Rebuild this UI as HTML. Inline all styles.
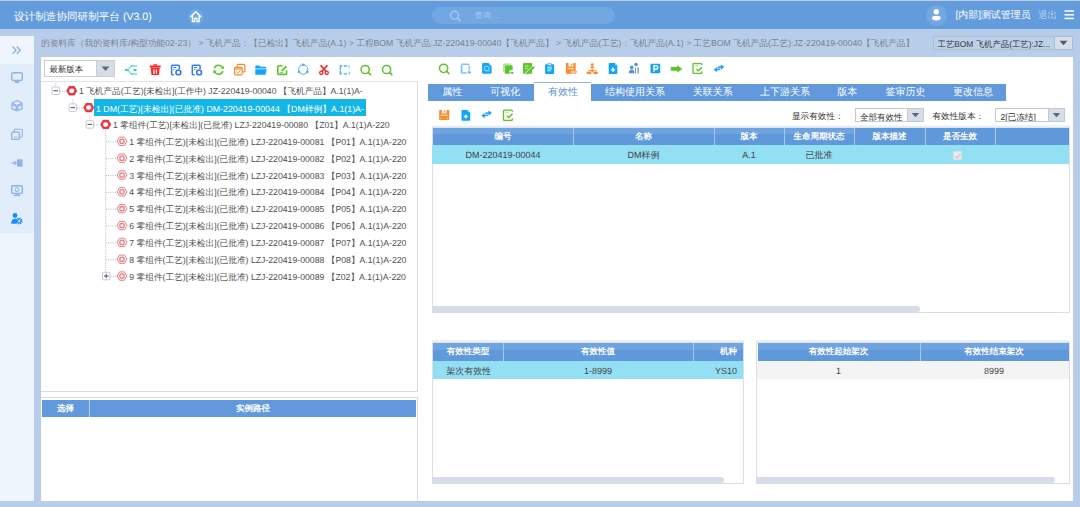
<!DOCTYPE html>
<html><head><meta charset="utf-8">
<style>
*{box-sizing:border-box}
html,body{margin:0;padding:0}
body{width:1080px;height:507px;overflow:hidden;position:relative;background:#b8cde9;font-family:"Liberation Sans",sans-serif;color:#333;text-rendering:geometricPrecision}
.a{position:absolute}
.t{position:absolute;white-space:nowrap}
svg{position:absolute;overflow:visible}
/* header */
#topline{left:0;top:0;width:1080px;height:1px;background:#bccde2}
#hdr{left:0;top:1px;width:1080px;height:27.5px;background:#629cdc}
#title{left:14px;top:10px;font-size:10.6px;font-weight:500;line-height:14px;color:#fff}
#homec{left:188px;top:8.5px;width:16px;height:16px;border-radius:50%;background:#70a6e2}
#search{left:432px;top:7px;width:183px;height:17px;border-radius:9px;background:#72a7e1}
#ph{left:474.5px;top:9px;font-size:8.2px;line-height:13px;color:#a9c9ef}
#userc{left:926px;top:4.5px;width:21px;height:21px;border-radius:50%;background:#72a7e1}
#uname{left:955.5px;top:8.7px;font-size:9.95px;font-weight:500;line-height:14px;color:#fff}
#logout{left:1038px;top:8.7px;font-size:9.6px;line-height:14px;color:#b9d2f0}
/* breadcrumb */
#crumb{left:41px;top:36px;font-size:8.7px;line-height:14px;color:#7c828c}
#crsel{left:932.5px;top:36px;width:140px;height:13.7px;border:1px solid #aebdd0;background:#bcd0ea}
#crseltxt{left:937.5px;top:36.5px;font-size:8.4px;line-height:14px;color:#333}
#crselbtn{left:1054px;top:36px;width:18.5px;height:13.7px;border:1px solid #aebdd0;background:#d7dfea}
/* sidebar */
#side{left:0;top:36px;width:34px;height:471px;background:#e1edfb}
#side1{left:0;top:36px;width:34px;height:28px;background:#eef5fd}
#side2{left:0;top:233px;width:34px;height:274px;background:#eef5fd}
/* panel */
#panel{left:41px;top:57px;width:1032px;height:443.5px;background:#fff}
#sep{left:41px;top:81px;width:376.5px;height:1px;background:#dfe4ec}
#treebox{left:41px;top:81px;width:377px;height:311px;border-top:1px solid #dfe4ec;border-right:1px solid #d6dce6;border-bottom:1px solid #d6dce6}
#vline{left:417px;top:397px;width:1px;height:104px;background:#d6dce6}
#selbox{left:41px;top:397px;width:377px;height:104px;border-top:1px solid #d6dce6}
.hd{position:absolute;background:linear-gradient(#70a4e0 0,#70a4e0 6.5px,#6098dc 6.5px);color:#fff;font-weight:bold;font-size:8.5px;text-align:center}
.hc{position:absolute;top:0;white-space:nowrap;text-align:center}
.col{position:absolute;top:0;bottom:0;width:1px;background:#a9c6ee}
/* version dropdown */
#vsel{left:44px;top:60px;width:71px;height:17px;border:1px solid #c9cfd9;background:#fff}
#vselbtn{left:96px;top:60px;width:19px;height:17px;border:1px solid #c9cfd9;background:#d7dde6}
#vseltxt{left:49.5px;top:62px;font-size:8.4px;line-height:14px;color:#333}
/* tree */
.row{position:absolute;height:16.85px;line-height:18.9px;font-size:8.7px;white-space:nowrap;color:#505050}
/* tabs */
#tabs{left:428px;top:84px;width:578px;height:17px;background:#6199dc}
#acttab{left:534px;top:82px;width:57px;height:19.5px;background:#fff;border-top:1px solid #8fb6ea}
.tab{position:absolute;top:84px;line-height:17px;font-size:10px;color:#fff;white-space:nowrap}
/* filter */
.lbl{position:absolute;font-size:8.6px;line-height:13px;color:#333;white-space:nowrap}
.dd{position:absolute;border:1px solid #c2c9d4;background:#fff}
.ddb{position:absolute;border:1px solid #c2c9d4;background:#d8dee7}
/* grids */
.grid{position:absolute;border:1px solid #d9dee8;background:#fff}
.cell{position:absolute;z-index:2;font-size:9px;line-height:20.5px;white-space:nowrap;color:#444;text-align:center}
.sb{position:absolute;height:6px;border-radius:0 3px 3px 0;background:#d6dde8}
</style></head><body>
<div class="a" id="topline"></div>
<div class="a" id="hdr"></div>
<div class="t" id="title">设计制造协同研制平台 (V3.0)</div>
<div class="a" id="homec"></div>
<div class="a" id="search"></div>
<div class="t" id="ph">查询 ...</div>
<div class="a" id="userc"></div>
<div class="t" id="uname">[内部]测试管理员</div>
<div class="t" id="logout">退出</div>

<div class="t" id="crumb">的资料库（我的资料库/构型功能02-23） &gt; 飞机产品：【已检出】飞机产品(A.1) &gt; 工程BOM 飞机产品:JZ-220419-00040【飞机产品】 &gt; 飞机产品(工艺)：飞机产品(A.1) &gt; 工艺BOM 飞机产品(工艺):JZ-220419-00040【飞机产品】</div>
<div class="a" id="crsel"></div>
<div class="t" id="crseltxt">工艺BOM 飞机产品(工艺):JZ...</div>
<div class="a" id="crselbtn"></div>

<div class="a" id="side"></div>
<div class="a" id="side1"></div>
<div class="a" id="side2"></div>

<div class="a" id="panel"></div>
<div class="a" id="treebox"></div>
<div class="a" id="selbox"></div>
<div class="a" id="vline"></div>
<div class="hd" style="left:42px;top:400px;width:374px;height:16.7px;line-height:17.2px;background:#6199dc">
  <div class="col" style="left:47px;background:#b5cff0"></div>
  <span class="hc" style="left:0;width:47px">选择</span>
  <span class="hc" style="left:48px;width:326px">实例路径</span>
</div>

<div class="a" id="vsel"></div>
<div class="a" id="vselbtn"></div>
<div class="t" id="vseltxt">最新版本</div>

<!-- TREE -->
<!--TREE-->
<div class="row" style="left:79px;top:82.3px;font-size:8.65px">1 飞机产品(工艺)[未检出](工作中) JZ-220419-00040 【飞机产品】A.1(1)A-</div>
<div class="a" style="left:94.4px;top:99px;width:271.7px;height:16.6px;background:#14b6e8"></div>
<div class="row" style="left:96px;top:100.15px;color:#fff;font-size:8.8px">1 DM(工艺)[未检出](已批准) DM-220419-00044 【DM样例】A.1(1)A-</div>
<div class="row" style="left:113px;top:116.0px">1 零组件(工艺)[未检出](已批准) LZJ-220419-00080 【Z01】A.1(1)A-220</div>
<div class="row" style="left:129.3px;top:132.85px">1 零组件(工艺)[未检出](已批准) LZJ-220419-00081 【P01】A.1(1)A-220</div>
<div class="row" style="left:129.3px;top:149.7px">2 零组件(工艺)[未检出](已批准) LZJ-220419-00082 【P02】A.1(1)A-220</div>
<div class="row" style="left:129.3px;top:166.55px">3 零组件(工艺)[未检出](已批准) LZJ-220419-00083 【P03】A.1(1)A-220</div>
<div class="row" style="left:129.3px;top:183.4px">4 零组件(工艺)[未检出](已批准) LZJ-220419-00084 【P04】A.1(1)A-220</div>
<div class="row" style="left:129.3px;top:200.25px">5 零组件(工艺)[未检出](已批准) LZJ-220419-00085 【P05】A.1(1)A-220</div>
<div class="row" style="left:129.3px;top:217.10000000000002px">6 零组件(工艺)[未检出](已批准) LZJ-220419-00086 【P06】A.1(1)A-220</div>
<div class="row" style="left:129.3px;top:233.95px">7 零组件(工艺)[未检出](已批准) LZJ-220419-00087 【P07】A.1(1)A-220</div>
<div class="row" style="left:129.3px;top:250.8px">8 零组件(工艺)[未检出](已批准) LZJ-220419-00088 【P08】A.1(1)A-220</div>
<div class="row" style="left:129.3px;top:267.65000000000003px">9 零组件(工艺)[未检出](已批准) LZJ-220419-00089 【Z02】A.1(1)A-220</div>
<svg class="a" style="left:0;top:0" width="1080" height="507"><line x1="105.75" y1="128.425" x2="105.75" y2="272.07500000000005" stroke="#b4b9cc" stroke-width="1" stroke-dasharray="1,1.2"/><rect x="52.0" y="86.975" width="7.5" height="7.5" rx="1" fill="#fff" stroke="#c3c7da" stroke-width="1"/><line x1="53.5" y1="90.725" x2="58.0" y2="90.725" stroke="#5d6885" stroke-width="1.2"/><line x1="55.75" y1="82.725" x2="55.75" y2="86.225" stroke="#b4b9cc" stroke-width="1" stroke-dasharray="1,1.2"/><line x1="60.0" y1="91.225" x2="66.5" y2="91.225" stroke="#b4b9cc" stroke-width="1" stroke-dasharray="1,1.2"/><polygon points="77.20,90.72 74.45,95.39 68.95,95.39 66.20,90.72 68.95,86.06 74.45,86.06" fill="#ef3340"/><ellipse cx="71.7" cy="90.725" rx="2.6" ry="2.3" fill="#fff"/><rect x="69.0" y="103.825" width="7.5" height="7.5" rx="1" fill="#fff" stroke="#c3c7da" stroke-width="1"/><line x1="70.5" y1="107.575" x2="75.0" y2="107.575" stroke="#5d6885" stroke-width="1.2"/><line x1="72.75" y1="99.575" x2="72.75" y2="103.075" stroke="#b4b9cc" stroke-width="1" stroke-dasharray="1,1.2"/><line x1="77.0" y1="108.075" x2="83.5" y2="108.075" stroke="#b4b9cc" stroke-width="1" stroke-dasharray="1,1.2"/><polygon points="94.20,107.58 91.45,112.24 85.95,112.24 83.20,107.58 85.95,102.91 91.45,102.91" fill="#ef3340"/><ellipse cx="88.7" cy="107.575" rx="2.6" ry="2.3" fill="#fff"/><rect x="86.0" y="120.675" width="7.5" height="7.5" rx="1" fill="#fff" stroke="#c3c7da" stroke-width="1"/><line x1="87.5" y1="124.425" x2="92.0" y2="124.425" stroke="#5d6885" stroke-width="1.2"/><line x1="89.75" y1="116.425" x2="89.75" y2="119.925" stroke="#b4b9cc" stroke-width="1" stroke-dasharray="1,1.2"/><line x1="94.0" y1="124.925" x2="100.5" y2="124.925" stroke="#b4b9cc" stroke-width="1" stroke-dasharray="1,1.2"/><polygon points="111.20,124.42 108.45,129.09 102.95,129.09 100.20,124.42 102.95,119.76 108.45,119.76" fill="#ef3340"/><ellipse cx="105.7" cy="124.425" rx="2.6" ry="2.3" fill="#fff"/><line x1="106" y1="141.775" x2="116" y2="141.775" stroke="#b4b9cc" stroke-width="1" stroke-dasharray="1,1.2"/><polygon points="126.90,141.28 124.45,145.43 119.55,145.43 117.10,141.28 119.55,137.12 124.45,137.12" fill="none" stroke="#f07a7e" stroke-width="1"/><circle cx="122" cy="141.275" r="2.2" fill="none" stroke="#f07a7e" stroke-width="1.3"/><line x1="106" y1="158.625" x2="116" y2="158.625" stroke="#b4b9cc" stroke-width="1" stroke-dasharray="1,1.2"/><polygon points="126.90,158.12 124.45,162.28 119.55,162.28 117.10,158.12 119.55,153.97 124.45,153.97" fill="none" stroke="#f07a7e" stroke-width="1"/><circle cx="122" cy="158.125" r="2.2" fill="none" stroke="#f07a7e" stroke-width="1.3"/><line x1="106" y1="175.47500000000002" x2="116" y2="175.47500000000002" stroke="#b4b9cc" stroke-width="1" stroke-dasharray="1,1.2"/><polygon points="126.90,174.98 124.45,179.13 119.55,179.13 117.10,174.98 119.55,170.82 124.45,170.82" fill="none" stroke="#f07a7e" stroke-width="1"/><circle cx="122" cy="174.97500000000002" r="2.2" fill="none" stroke="#f07a7e" stroke-width="1.3"/><line x1="106" y1="192.32500000000002" x2="116" y2="192.32500000000002" stroke="#b4b9cc" stroke-width="1" stroke-dasharray="1,1.2"/><polygon points="126.90,191.83 124.45,195.98 119.55,195.98 117.10,191.83 119.55,187.67 124.45,187.67" fill="none" stroke="#f07a7e" stroke-width="1"/><circle cx="122" cy="191.82500000000002" r="2.2" fill="none" stroke="#f07a7e" stroke-width="1.3"/><line x1="106" y1="209.175" x2="116" y2="209.175" stroke="#b4b9cc" stroke-width="1" stroke-dasharray="1,1.2"/><polygon points="126.90,208.68 124.45,212.83 119.55,212.83 117.10,208.68 119.55,204.52 124.45,204.52" fill="none" stroke="#f07a7e" stroke-width="1"/><circle cx="122" cy="208.675" r="2.2" fill="none" stroke="#f07a7e" stroke-width="1.3"/><line x1="106" y1="226.02500000000003" x2="116" y2="226.02500000000003" stroke="#b4b9cc" stroke-width="1" stroke-dasharray="1,1.2"/><polygon points="126.90,225.53 124.45,229.68 119.55,229.68 117.10,225.53 119.55,221.37 124.45,221.37" fill="none" stroke="#f07a7e" stroke-width="1"/><circle cx="122" cy="225.52500000000003" r="2.2" fill="none" stroke="#f07a7e" stroke-width="1.3"/><line x1="106" y1="242.875" x2="116" y2="242.875" stroke="#b4b9cc" stroke-width="1" stroke-dasharray="1,1.2"/><polygon points="126.90,242.38 124.45,246.53 119.55,246.53 117.10,242.38 119.55,238.22 124.45,238.22" fill="none" stroke="#f07a7e" stroke-width="1"/><circle cx="122" cy="242.375" r="2.2" fill="none" stroke="#f07a7e" stroke-width="1.3"/><line x1="106" y1="259.725" x2="116" y2="259.725" stroke="#b4b9cc" stroke-width="1" stroke-dasharray="1,1.2"/><polygon points="126.90,259.23 124.45,263.38 119.55,263.38 117.10,259.23 119.55,255.07 124.45,255.07" fill="none" stroke="#f07a7e" stroke-width="1"/><circle cx="122" cy="259.225" r="2.2" fill="none" stroke="#f07a7e" stroke-width="1.3"/><rect x="102.5" y="272.32500000000005" width="7.5" height="7.5" rx="1" fill="#fff" stroke="#c3c7da" stroke-width="1"/><line x1="104" y1="276.07500000000005" x2="108.5" y2="276.07500000000005" stroke="#5d6885" stroke-width="1.2"/><line x1="106.25" y1="273.82500000000005" x2="106.25" y2="278.32500000000005" stroke="#5d6885" stroke-width="1.2"/><line x1="110.5" y1="276.57500000000005" x2="116" y2="276.57500000000005" stroke="#b4b9cc" stroke-width="1" stroke-dasharray="1,1.2"/><polygon points="126.90,276.08 124.45,280.23 119.55,280.23 117.10,276.08 119.55,271.92 124.45,271.92" fill="none" stroke="#f07a7e" stroke-width="1"/><circle cx="122" cy="276.07500000000005" r="2.2" fill="none" stroke="#f07a7e" stroke-width="1.3"/></svg>
<!--/TREE-->

<!-- TABS -->
<div class="a" id="tabs"></div>
<div class="a" id="acttab"></div>
<div class="tab" style="left:442.2px;color:#fff">属性</div>
<div class="tab" style="left:490.2px;color:#fff">可视化</div>
<div class="tab" style="left:548.1px;color:#5b8fd8">有效性</div>
<div class="tab" style="left:605.1px;color:#fff">结构使用关系</div>
<div class="tab" style="left:692.7px;color:#fff">关联关系</div>
<div class="tab" style="left:759.9px;color:#fff">上下游关系</div>
<div class="tab" style="left:837.3px;color:#fff">版本</div>
<div class="tab" style="left:885.5px;color:#fff">签审历史</div>
<div class="tab" style="left:952.9px;color:#fff">更改信息</div>


<!-- filter row -->
<div class="lbl" style="left:792px;top:109.5px">显示有效性：</div>
<div class="dd" style="left:855px;top:108px;width:69px;height:14px"></div>
<div class="ddb" style="left:907px;top:108px;width:17px;height:14px"></div>
<div class="a" style="left:856px;top:109px;width:51px;height:12px;overflow:hidden"><div class="lbl" style="left:4px;top:1.9px;font-size:8.5px">全部有效性</div></div>
<div class="lbl" style="left:932.5px;top:109.5px">有效性版本：</div>
<div class="dd" style="left:995px;top:108px;width:70px;height:14px"></div>
<div class="ddb" style="left:1048px;top:108px;width:17px;height:14px"></div>
<div class="a" style="left:996px;top:109px;width:52px;height:12px;overflow:hidden"><div class="lbl" style="left:4.5px;top:1.9px">2[已冻结]</div></div>

<!-- main grid -->
<div class="grid" style="left:432px;top:126px;width:638px;height:187px;border-top:0"></div>
<div class="a" style="left:432px;top:125px;width:638px;height:2.5px;background:linear-gradient(#fbfcfd,#d9dee6)"></div>
<div class="hd" style="left:433px;top:127.5px;width:636px;height:17.5px;line-height:17.5px;background:linear-gradient(#70a4e0 0,#70a4e0 6.5px,#6098dc 6.5px) 0 0/421px 100% no-repeat,#6098dc">
  <div class="col" style="left:140px"></div>
  <div class="col" style="left:281px"></div>
  <div class="col" style="left:351px"></div>
  <div class="col" style="left:421px"></div>
  <div class="col" style="left:492px"></div>
  <div class="col" style="left:562px"></div>
<span class="hc" style="left:0px;width:140px">编号</span><span class="hc" style="left:140px;width:141px">名称</span><span class="hc" style="left:281px;width:70px">版本</span><span class="hc" style="left:351px;width:70px">生命周期状态</span><span class="hc" style="left:421px;width:71px">版本描述</span><span class="hc" style="left:492px;width:70px">是否生效</span>
</div>
<div class="a" style="left:432px;top:145px;width:637px;height:18.5px;background:#93e0f5"></div>
<div class="cell" style="left:433px;top:145px;width:140px">DM-220419-00044</div><div class="cell" style="left:573px;top:145px;width:141px">DM样例</div><div class="cell" style="left:714px;top:145px;width:70px">A.1</div><div class="cell" style="left:784px;top:145px;width:70px">已批准</div><div class="a" style="left:952.5px;top:150.5px;width:9.5px;height:9.5px;border:1px solid #dcdfe3;background:#e9eaec;border-radius:1px"></div><svg style="left:952.5px;top:150.5px;z-index:2" width="10" height="10"><path d="M2.2 5 L4.2 6.9 L7.6 3" fill="none" stroke="#c6c8cc" stroke-width="1.2"/></svg>
<div class="sb" style="left:432px;top:306px;width:488px"></div>

<!-- bottom grids -->
<div class="grid" style="left:432px;top:340px;width:312px;height:144px;border-top:0"></div>
<div class="a" style="left:432px;top:340px;width:312px;height:3px;background:linear-gradient(#f3f5f8,#dde2ea)"></div>
<div class="hd" style="left:433px;top:343px;width:310px;height:17.5px;line-height:17.5px">
  <div class="col" style="left:70px"></div>
  <div class="col" style="left:260px"></div>
  <span class="hc" style="left:0;width:70px">有效性类型</span><span class="hc" style="left:70px;width:190px">有效性值</span><span class="hc" style="left:260px;width:44px;text-align:right">机种</span>
</div>
<div class="cell" style="left:446.3px;top:360.5px;text-align:left">架次有效性</div>
<div class="cell" style="left:503px;top:360.5px;width:190px">1-8999</div>
<div class="cell" style="left:693px;top:360.5px;width:44px;text-align:right">YS10</div>
<div class="a" style="left:433px;top:360.5px;width:310px;height:18.5px;background:#93e0f5"></div>
<div class="sb" style="left:432px;top:477px;width:292px"></div>

<div class="grid" style="left:756px;top:340px;width:313.5px;height:144px;border-top:0"></div>
<div class="a" style="left:756px;top:340px;width:313.5px;height:3px;background:linear-gradient(#f3f5f8,#dde2ea)"></div>
<div class="hd" style="left:757.5px;top:343px;width:311px;height:17.5px;line-height:17.5px">
  <div class="col" style="left:162px"></div>
  <span class="hc" style="left:0;width:162px">有效性起始架次</span><span class="hc" style="left:162px;width:149px">有效性结束架次</span>
</div>
<div class="cell" style="left:757.5px;top:360.5px;width:162px">1</div>
<div class="cell" style="left:919.5px;top:360.5px;width:149px">8999</div>
<div class="a" style="left:757px;top:360.5px;width:312px;height:18.5px;background:#f4f4f5"></div>
<div class="sb" style="left:757px;top:477px;width:298px"></div>

<div class="a" style="left:0;top:500.5px;width:1080px;height:7px;background:#b8cde9"></div>
<!--ICONS-->
<svg class="a" style="left:0;top:0;z-index:3" width="1080" height="507"><g transform="translate(190.3,11)"><path d="M0.6 5.6 L5.5 0.8 L10.4 5.6" fill="none" stroke="#fff" stroke-width="1.5" stroke-linejoin="round" stroke-linecap="round"/><path d="M2.2 4.8 V10.6 H4.3 V7.6 Q5.5 6.3 6.7 7.6 V10.6 H8.8 V4.8" fill="none" stroke="#fff" stroke-width="1.4" stroke-linejoin="round"/></g><g transform="translate(449.5,10.2)"><circle cx="5" cy="5" r="3.9" fill="none" stroke="#a9c9ef" stroke-width="1.4"/><path d="M7.8 7.8 L10.6 10.6" stroke="#a9c9ef" stroke-width="1.5" stroke-linecap="round"/></g><g transform="translate(936.3,14.8)"><circle cx="0" cy="-3" r="2.7" fill="#fff"/><ellipse cx="0" cy="3.3" rx="4.4" ry="2.3" fill="#fff"/></g><g transform="translate(1064.5,10.3)"><rect x="0" y="0" width="9.5" height="1.5" fill="#fff"/><rect x="0" y="3.7" width="9.5" height="1.5" fill="#fff"/><rect x="0" y="7.4" width="9.5" height="1.5" fill="#fff"/></g><g transform="translate(1063.5,43)"><path d="M-4 -2.2 L4 -2.2 L0 2.3 Z" fill="#4e5e74"/></g><g transform="translate(105.5,68.8)"><path d="M-4 -2.2 L4 -2.2 L0 2.3 Z" fill="#5a6a80"/></g><g transform="translate(915.5,115)"><path d="M-3.8 -2 L3.8 -2 L0 2.2 Z" fill="#5a6a80"/></g><g transform="translate(1056.5,115)"><path d="M-3.8 -2 L3.8 -2 L0 2.2 Z" fill="#5a6a80"/></g><g transform="translate(12,46)"><path d="M0.6 0.6 L4 4.2 L0.6 7.8 M4.8 0.6 L8.2 4.2 L4.8 7.8" fill="none" stroke="#8fb3e3" stroke-width="1.4" stroke-linejoin="round"/></g><g transform="translate(11,72)"><rect x="0.7" y="0.7" width="10.6" height="7.8" rx="1.5" fill="none" stroke="#8fb3e3" stroke-width="1.4"/><path d="M4.5 8.5 L3.5 11 H8.5 L7.5 8.5 Z" fill="#8fb3e3"/></g><g transform="translate(11,100)"><path d="M6 0.5 L11 3 L6 5.5 L1 3 Z" fill="none" stroke="#8fb3e3" stroke-width="1.1"/><path d="M1 4.5 V8.8 L5.2 10.6 V6.2 Z M11 4.5 V8.8 L6.8 10.6 V6.2 Z" fill="none" stroke="#8fb3e3" stroke-width="1.3"/></g><g transform="translate(11,128.5)"><rect x="0.7" y="3.7" width="7.6" height="7.2" rx="1" fill="none" stroke="#8fb3e3" stroke-width="1.3"/><path d="M3.2 3.6 V1.8 Q3.2 0.7 4.3 0.7 H10.2 Q11.3 0.7 11.3 1.8 V7.6 Q11.3 8.7 10.2 8.7 H8.5" fill="none" stroke="#8fb3e3" stroke-width="1.1"/><path d="M2.8 8.6 H6.2" stroke="#8fb3e3" stroke-width="1"/></g><g transform="translate(11,159)"><rect x="6" y="0.3" width="5.5" height="7.4" fill="#8fb3e3"/><path d="M0.3 4 H5" stroke="#8fb3e3" stroke-width="1.2"/><path d="M3.3 2.2 L5.2 4 L3.3 5.8" fill="none" stroke="#8fb3e3" stroke-width="1.2"/></g><g transform="translate(11,185)"><rect x="0.7" y="0.7" width="10.6" height="7.8" rx="1.3" fill="none" stroke="#8fb3e3" stroke-width="1.4"/><circle cx="6" cy="4.6" r="2" fill="none" stroke="#8fb3e3" stroke-width="1"/><path d="M3 10.4 H9" stroke="#8fb3e3" stroke-width="1.3"/><path d="M6 8.5 V10.4" stroke="#8fb3e3" stroke-width="1.2"/></g><g transform="translate(11,213)"><circle cx="4" cy="2.5" r="2.4" fill="#1a8cff"/><path d="M0.2 10.8 Q0.2 5.8 4.2 5.8 Q6 5.8 6.8 7 L5.8 10.8 Z" fill="#1a8cff"/><circle cx="8.2" cy="8" r="2.6" fill="none" stroke="#1a8cff" stroke-width="1.6" stroke-dasharray="1.3,0.7"/><circle cx="8.2" cy="8" r="1.6" fill="none" stroke="#1a8cff" stroke-width="1"/></g><g transform="translate(125,64.5)"><rect x="0" y="4.5" width="2.8" height="2" fill="#2bd4cc"/><path d="M2.8 5.5 L6 1.5 H12 M2.8 5.5 L6 9.5 H12" fill="none" stroke="#2bd4cc" stroke-width="1"/><path d="M7 0.6 V2.4 M7 8.6 V10.4" stroke="#2bd4cc" stroke-width="1"/><circle cx="10" cy="5.5" r="1.3" fill="#2bd4cc"/><path d="M7.8 5.5 H12" stroke="#2bd4cc" stroke-width="0.8"/></g><g transform="translate(149.5,64)"><path d="M3.8 0.3 H7.5 V1.6 H3.8 Z" fill="#ff2020"/><rect x="0.2" y="1.6" width="11" height="1.9" rx="0.6" fill="#ff2020"/><path d="M1.2 3.8 H10.2 L9.4 11 H2 Z" fill="#ff2020"/><rect x="3.8" y="5.3" width="1.3" height="4.5" fill="#fff"/><rect x="6.3" y="5.3" width="1.3" height="4.5" fill="#fff"/></g><g transform="translate(170.8,64.5)"><path d="M3 10.3 H1.8 Q0.8 10.3 0.8 9.3 V1.8 Q0.8 0.8 1.8 0.8 H7.6 Q8.6 0.8 8.6 1.8 V4.6" fill="none" stroke="#2f7cf6" stroke-width="1.5"/><path d="M2.6 3 H5.4 M2.6 5 H3.8" stroke="#2f7cf6" stroke-width="1"/><circle cx="7.6" cy="7.9" r="2.4" fill="none" stroke="#2f7cf6" stroke-width="1.6"/></g><g transform="translate(191.5,64.5)"><path d="M3 10.3 H1.8 Q0.8 10.3 0.8 9.3 V1.8 Q0.8 0.8 1.8 0.8 H7.6 Q8.6 0.8 8.6 1.8 V4.6" fill="none" stroke="#2f7cf6" stroke-width="1.5"/><path d="M2.6 3 H5.4 M2.6 5 H3.8" stroke="#2f7cf6" stroke-width="1"/><circle cx="7.6" cy="7.9" r="2.4" fill="none" stroke="#2f7cf6" stroke-width="1.6"/></g><g transform="translate(213,64)"><path d="M1.37 4.16 A4.5 4.5 0 0 1 9.50 3.45 M9.83 7.24 A4.5 4.5 0 0 1 1.70 7.95" fill="none" stroke="#5bc52a" stroke-width="1.6"/><path d="M10.60 5.36 L7.44 4.29 L11.25 2.09 Z M0.60 6.04 L3.76 7.11 L-0.05 9.31 Z" fill="#5bc52a"/></g><g transform="translate(234,64)"><path d="M3.2 2.8 V1.5 Q3.2 0.4 4.3 0.4 H9.8 Q10.9 0.4 10.9 1.5 V6.8 Q10.9 7.8 9.8 7.8 H8.4" fill="none" stroke="#ff8a2a" stroke-width="1.2"/><rect x="0.6" y="3.4" width="7.6" height="7.4" rx="1" fill="none" stroke="#ff8a2a" stroke-width="1.2"/><path d="M0.6 5 H8.2" stroke="#ff8a2a" stroke-width="1.2"/><path d="M2.3 7.6 L3.8 9 L6.5 6.4" fill="none" stroke="#ff8a2a" stroke-width="1"/></g><g transform="translate(255,65.3)"><path d="M0.3 1 Q0.3 0.2 1.1 0.2 H4.2 L5.4 1.5 H10.2 Q11 1.5 11 2.3 V3.3 H0.3 Z" fill="#0ea5ff"/><path d="M0.3 4 H11.6 L10.5 9.4 H0.3 Z" fill="#0ea5ff"/></g><g transform="translate(277,64.8)"><path d="M5.5 1 H1.8 Q0.8 1 0.8 2 V8.6 Q0.8 9.6 1.8 9.6 H8.6 Q9.6 9.6 9.6 8.6 V5.5" fill="none" stroke="#5bc52a" stroke-width="1.6"/><path d="M4.2 6.6 L4.6 4.9 L8.6 0.9 L10 2.3 L6 6.3 Z" fill="#5bc52a"/><path d="M2.8 7.8 H6" stroke="#5bc52a" stroke-width="0.8"/></g><g transform="translate(303.2,69.5)"><circle cx="0" cy="0" r="4.7" fill="none" stroke="#49b0ff" stroke-width="1"/><circle cx="0" cy="-4.7" r="1.3" fill="#49b0ff"/><circle cx="-4.1" cy="2.4" r="1.3" fill="#49b0ff"/><circle cx="4.1" cy="2.4" r="1.3" fill="#49b0ff"/></g><g transform="translate(319,64.8)"><path d="M1.6 0.4 L7 6.5 M8.4 0.4 L3 6.5" stroke="#ff2020" stroke-width="1.7"/><circle cx="2.3" cy="8" r="1.6" fill="none" stroke="#ff2020" stroke-width="1.3"/><circle cx="7.7" cy="8" r="1.6" fill="none" stroke="#ff2020" stroke-width="1.3"/></g><g transform="translate(339.5,65)"><path d="M0.8 5 V1 H2.8 M4.2 1 H7.4 M0.8 5.5 V8.8 H2 M4.2 8.8 H7.6" fill="none" stroke="#49b0ff" stroke-width="1.3"/><path d="M9.5 0.3 V3.2 M9.8 6.8 V9.5" stroke="#49b0ff" stroke-width="0.9"/><path d="M0.2 8.2 L1.5 9.8 L2.6 8.2 Z" fill="#49b0ff"/></g><g transform="translate(360.4,64.6)"><circle cx="4.8" cy="4.9" r="4.1" fill="none" stroke="#5bc52a" stroke-width="1.5"/><path d="M7.9 8 L10 10.1" stroke="#5bc52a" stroke-width="1.7" stroke-linecap="round"/></g><g transform="translate(381.8,64.6)"><circle cx="4.8" cy="4.9" r="4.1" fill="none" stroke="#5bc52a" stroke-width="1.5"/><path d="M7.9 8 L10 10.1" stroke="#5bc52a" stroke-width="1.7" stroke-linecap="round"/></g><g transform="translate(438.8,63.4)"><circle cx="4.8" cy="4.9" r="4.1" fill="none" stroke="#5bc52a" stroke-width="1.5"/><path d="M7.9 8 L10 10.1" stroke="#5bc52a" stroke-width="1.7" stroke-linecap="round"/></g><g transform="translate(460.5,63.4)"><path d="M1 0.9 H7.6 L8.4 1.7" fill="none" stroke="#7cc2f7" stroke-width="1.4"/><path d="M8.7 2.2 V7.2 M6 9.6 H1.6 Q0.9 9.6 0.9 8.9 V1.4" fill="none" stroke="#7cc2f7" stroke-width="1.3"/><path d="M1.7 2.8 V8.6" stroke="#7cc2f7" stroke-width="0.8"/><path d="M6.6 8.9 H8.4 V7.6 L10.4 8.9 L8.4 10.2 V8.9" fill="#5fb4f2" stroke="#5fb4f2" stroke-width="0.8"/></g><g transform="translate(482.1,63.1)"><path d="M0 1 Q0 0 1 0 H6.6 L9.5 2.9 V9.6 Q9.5 10.6 8.5 10.6 H1 Q0 10.6 0 9.6 Z" fill="#0ea5ff"/><path d="M6.8 0.6 L8.9 2.7" stroke="#fff" stroke-width="0.6" opacity="0.7"/><circle cx="4.6" cy="5.5" r="2.3" fill="none" stroke="#8fd3ff" stroke-width="1.1"/><path d="M6.2 7.1 L7.3 8.3" stroke="#8fd3ff" stroke-width="1.1"/></g><g transform="translate(502.9,63)"><rect x="0.3" y="0.5" width="7.6" height="9" rx="1" fill="#a8e08c"/><rect x="1.7" y="2" width="8.3" height="9" rx="1" fill="#5bc52a" stroke="#fff" stroke-width="0.5"/><circle cx="8.8" cy="9.8" r="2.7" fill="#fff"/><path d="M6.3 9.8 H9.4" stroke="#5bc52a" stroke-width="1.1"/><path d="M8.8 8.2 L11 9.8 L8.8 11.4 Z" fill="#5bc52a"/></g><g transform="translate(523,63)"><rect x="0" y="0" width="9.2" height="10.8" rx="1" fill="#5bc52a"/><path d="M2 3 H5.8 M2 5.3 H4.8" stroke="#fff" stroke-width="0.9" opacity="0.75"/><path d="M2.4 10.4 L9.6 3.2" stroke="#fff" stroke-width="1.1" opacity="0.85"/><path d="M3.9 10.8 L10.9 3.8" stroke="#5bc52a" stroke-width="2.3"/></g><g transform="translate(545.1,63.4)"><rect x="0" y="0.8" width="9" height="9.7" rx="1" fill="#0ea5ff"/><rect x="2.6" y="0" width="3.8" height="1.8" rx="0.6" fill="#fff" stroke="#0ea5ff" stroke-width="0.6"/><path d="M2.2 3.8 H6.8 M2.2 5.6 H6.8 M2.2 7.4 H5.6" stroke="#fff" stroke-width="0.9"/></g><g transform="translate(565.9,63)"><rect x="0" y="0" width="9.8" height="10.8" rx="0.6" fill="#ff8a2a"/><rect x="2.6" y="0" width="4.8" height="3.6" fill="#fff"/><rect x="5.2" y="0.8" width="1.4" height="1.8" fill="#ff8a2a"/><rect x="1.6" y="5.2" width="6.6" height="0.9" fill="#fff"/><path d="M5.5 9 H10.5" stroke="#fff" stroke-width="2.4"/><path d="M6.2 9 H10.6 M9.3 7.6 L10.7 9 L9.3 10.4" fill="none" stroke="#ff8a2a" stroke-width="1"/></g><g transform="translate(586.8,63.2)"><circle cx="5.5" cy="1.4" r="1.4" fill="#ff8a2a"/><rect x="3.9" y="3" width="3.2" height="2.3" rx="0.6" fill="#ff8a2a"/><path d="M5.5 5.3 V7.2 M2 8.5 V7.2 H9 V8.5" fill="none" stroke="#ff8a2a" stroke-width="0.9"/><rect x="0" y="8.6" width="4.4" height="2.2" rx="0.6" fill="#ff8a2a"/><rect x="6.6" y="8.6" width="4.4" height="2.2" rx="0.6" fill="#ff8a2a"/><rect x="4.4" y="7" width="2.2" height="2" fill="#ff8a2a"/></g><g transform="translate(608.7,63)"><path d="M0 1 Q0 0 1 0 H6.2 L8.6 2.4 V10 Q8.6 11 7.6 11 H1 Q0 11 0 10 Z" fill="#0ea5ff"/><path d="M6.4 0 V2.2 H8.6" fill="#fff" opacity="0.6"/><path d="M4.3 4.6 V8.8 M2.2 6.7 H6.4" stroke="#fff" stroke-width="1.5"/></g><g transform="translate(628.9,62.8)"><circle cx="7.2" cy="1.8" r="1.8" fill="#5b8fdb"/><circle cx="2.8" cy="4.6" r="1.8" fill="#5b8fdb"/><path d="M0 10.5 Q0 6.8 2.9 6.8 Q5.6 6.8 5.6 10.5 Z" fill="#5b8fdb"/><rect x="6.2" y="5" width="0.9" height="5.6" fill="#5b8fdb"/><rect x="8.6" y="4.4" width="1.3" height="6.4" rx="0.5" fill="#5b8fdb"/></g><g transform="translate(650.5,63.7)"><rect x="0" y="0" width="9.7" height="9.6" rx="1" fill="#0ea5ff"/><path d="M3.5 8 V2 H5.6 Q7.3 2 7.3 3.8 Q7.3 5.6 5.6 5.6 H3.5" fill="none" stroke="#fff" stroke-width="1.4"/></g><g transform="translate(670.8,65.2)"><path d="M0 1.8 H6.4 V0 L11.6 3.7 L6.4 7.4 V5.6 H0 Z" fill="#5bc52a"/></g><g transform="translate(692.4,63)"><path d="M9.4 2.2 V1.2 Q9.4 0.6 8.8 0.6 H1.2 Q0.6 0.6 0.6 1.2 V9.8 Q0.6 10.4 1.2 10.4 H8.8 Q9.4 10.4 9.4 9.8 V8.6" fill="none" stroke="#5bc52a" stroke-width="1.3"/><path d="M2.6 2.8 H5.6" stroke="#a8e08a" stroke-width="0.9"/><path d="M4 6.2 L5.8 7.8 L9.6 4.2" fill="none" stroke="#5bc52a" stroke-width="1.5"/></g><g transform="translate(713.4,65)"><g transform="rotate(-5 5.5 3.2)"><rect x="4.4" y="1.5" width="3.6" height="1.5" fill="#12a0fa"/><path d="M7.6 -0.4 L10.9 2.25 L7.6 4.9 Z" fill="#12a0fa"/><rect x="3" y="3.6" width="3.8" height="1.5" fill="#12a0fa"/><path d="M3.5 1.7 L0.2 4.35 L3.5 7 Z" fill="#12a0fa"/></g></g><g transform="translate(439.2,110)"><rect x="0" y="0" width="10" height="10" rx="0.6" fill="#ff8a2a"/><rect x="2.6" y="0" width="4.8" height="3.4" fill="#fff" opacity="0.9"/><rect x="4.6" y="0.6" width="1.2" height="1.8" fill="#ff8a2a"/><rect x="1.4" y="4.8" width="7.2" height="0.9" fill="#fff" opacity="0.9"/><rect x="1" y="8.2" width="1.2" height="0.8" fill="#fff"/><rect x="7.8" y="8.2" width="1.2" height="0.8" fill="#fff"/></g><g transform="translate(461.5,110)"><path d="M0 1 Q0 0 1 0 H6.2 L8.7 2.5 V9.7 Q8.7 10.7 7.7 10.7 H1 Q0 10.7 0 9.7 Z" fill="#0ea5ff"/><path d="M6.4 0 V2.3 H8.7" fill="#fff" opacity="0.6"/><path d="M4.3 4.6 V8.6 M2.3 6.6 H6.3" stroke="#fff" stroke-width="1.5"/></g><g transform="translate(481,111)"><g transform="rotate(-5 5.5 3.2)"><rect x="4.4" y="1.5" width="3.6" height="1.5" fill="#12a0fa"/><path d="M7.6 -0.4 L10.9 2.25 L7.6 4.9 Z" fill="#12a0fa"/><rect x="3" y="3.6" width="3.8" height="1.5" fill="#12a0fa"/><path d="M3.5 1.7 L0.2 4.35 L3.5 7 Z" fill="#12a0fa"/></g></g><g transform="translate(502.9,109.6)"><path d="M9.4 2.2 V1.2 Q9.4 0.6 8.8 0.6 H1.2 Q0.6 0.6 0.6 1.2 V10.2 Q0.6 10.8 1.2 10.8 H8.8 Q9.4 10.8 9.4 10.2 V8.6" fill="none" stroke="#5bc52a" stroke-width="1.3"/><path d="M2.6 2.8 H5.6" stroke="#a8e08a" stroke-width="0.9"/><path d="M4 6.2 L5.8 7.8 L9.6 4.2" fill="none" stroke="#5bc52a" stroke-width="1.5"/></g></svg>
<!--/ICONS-->
</body></html>
